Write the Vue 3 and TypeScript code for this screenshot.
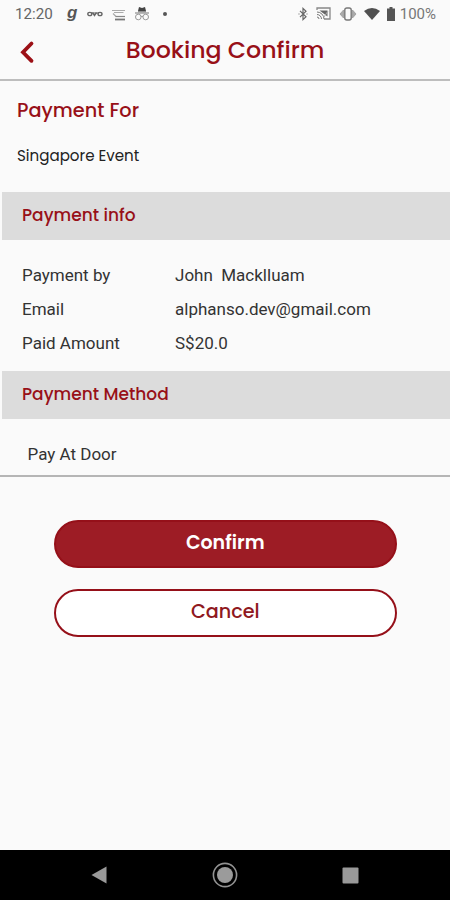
<script setup lang="ts">
interface InfoRow {
  label: string
  value: string
  key: string
}

const rows: InfoRow[] = [
  { key: 'by', label: 'Payment by', value: 'John  Macklluam' },
  { key: 'email', label: 'Email', value: 'alphanso.dev@gmail.com' },
  { key: 'amount', label: 'Paid Amount', value: 'S$20.0' },
]
</script>

<template>
  <div class="screen">
    <div class="status">
      <span class="time">12:20</span>
      <span class="g">g</span>
      <svg class="ovo" width="16" height="8" viewBox="0 0 16 8" fill="none" stroke="#666" stroke-width="1.4">
        <ellipse cx="2.8" cy="4" rx="2" ry="1.6" /><path d="M5.500 2.500l2 3 2-3" /><ellipse cx="13" cy="4" rx="2" ry="1.6" /><path d="M4 3h8" stroke-width="1" />
      </svg>
      <svg class="cart" width="14" height="13" viewBox="0 0 14 13" fill="none" stroke="#888" stroke-width="1.2">
        <path d="M0 1.500h13M2 3.500h9.500M1 4.500l3 3" stroke="#aaa" /><path d="M3.500 7.500h9.500" stroke="#888" /><path d="M3 10.500h10" stroke="#777" stroke-width="1.800" />
      </svg>
      <svg class="spy" width="16" height="15" viewBox="0 0 16 15">
        <path d="M4 5l1-4 3 1 3-1 1 4z" fill="#444" /><path d="M1 7h14M4 5.700h8" stroke="#777" />
        <g fill="none" stroke="#999"><circle cx="4.300" cy="11" r="2.800" /><circle cx="11.700" cy="11" r="2.800" /><path d="M7 10.400h2" /></g>
      </svg>
      <i class="dot"></i>
      <span class="spacer"></span>
      <svg class="bluetooth" width="10" height="14" viewBox="0 0 10 14" fill="none" stroke="#666" stroke-width="1.2">
        <path d="M2 3.800l6 6L5 12.600V1.400l3 2.800-6 6" /><path d="M.5 7h1M8.500 7h1" />
      </svg>
      <svg class="cast" width="15" height="13" viewBox="0 0 15 13" fill="none" stroke="#777">
        <path d="M1 3V1h13v11H8" stroke="#888" stroke-width="1.300" /><path d="M1 5a7 7 0 0 1 7 7M1 7.500A4.500 4.500 0 0 1 5.500 12M1 10a2 2 0 0 1 2 2" /><path d="M3.500 3.500h8v6z" fill="#666" stroke="none" /><path d="M8 10l4-6" stroke="#aaa" />
      </svg>
      <svg class="vibrate" width="18" height="14" viewBox="0 0 18 14" fill="none" stroke="#777">
        <rect x="5.800" y="1" width="6.400" height="12" rx="2" stroke-width="1.400" /><path d="M4.500 3L1 7l3.500 4zM13.500 3L17 7l-3.500 4z" fill="#aaa" stroke="#999" stroke-width=".8" />
      </svg>
      <svg class="wifi" width="16" height="12" viewBox="0 0 16 12"><path d="M0 3Q8-3 16 3L8 12z" fill="#505050" /></svg>
      <svg class="battery" width="8" height="14" viewBox="0 0 8 14"><path d="M2.500 0h3v1.500H8V14H0V1.500h2.500z" fill="#555" /></svg>
      <span class="percent">100%</span>
    </div>

    <header class="header">
      <svg class="back" width="16" height="24" viewBox="0 0 16 24" fill="none" stroke="#9c1016" stroke-width="3.800">
        <path d="M12.500 3.500L4 12.300l8.500 8.500" stroke-linecap="round" />
      </svg>
      <h1>Booking Confirm</h1>
    </header>

    <section class="event">
      <h2>Payment For</h2>
      <p>Singapore Event</p>
    </section>

    <h3 class="band info">Payment info</h3>
    <dl class="rows">
      <div v-for="row in rows" :key="row.key" class="row" :class="row.key">
        <dt>{{ row.label }}</dt>
        <dd>{{ row.value }}</dd>
      </div>
    </dl>
    <h3 class="band method">Payment Method</h3>
    <p class="door">Pay At Door</p>

    <div class="actions">
      <button class="confirm" type="button">Confirm</button>
      <button class="cancel" type="button">Cancel</button>
    </div>

    <nav class="nav">
      <svg width="17" height="20" viewBox="0 0 17 20"><path d="M.5 10L15.500 1.500v17z" fill="#999" /></svg>
      <svg width="26" height="26" viewBox="0 0 26 26"><circle cx="13" cy="13" r="11.600" fill="none" stroke="#929292" stroke-width="1.600" /><circle cx="13" cy="13" r="8" fill="#9b9b9b" /></svg>
      <svg width="17" height="17" viewBox="0 0 17 17"><rect x=".5" y=".5" width="16" height="16" rx="1" fill="#999" /></svg>
    </nav>
  </div>
</template>

<style>
body {
  margin: 0;
  background: #fafafa;
}
</style>

<style scoped>
.screen {
  box-sizing: border-box;
  width: 450px;
  height: 900px;
  display: flex;
  flex-direction: column;
  overflow: hidden;
  background: #fafafa;
  color: #333;
  font-family: Roboto, "Liberation Sans", sans-serif;
}
h1, h2, h3, p, dl, dt, dd {
  margin: 0;
}
h1, h2, h3, .event p, button {
  font-family: Poppins, Inter, sans-serif;
  font-weight: 500;
  color: #981018;
  white-space: nowrap;
}
.status {
  height: 27px;
  flex: none;
  display: flex;
  align-items: center;
  padding: 0 14px 0 15px;
  color: #666;
  font-size: 15.200px;
}
.status svg {
  flex: none;
}
.time {
  width: 52px;
  padding-top: 1px;
}
.g {
  width: 20px;
  font: italic bold 17px/20px "Liberation Sans", sans-serif;
  color: #555;
  margin-top: -2px;
}
.cart {
  margin: 3px 0 0 9px;
}
.spy {
  margin-left: 8px;
}
.dot {
  width: 4px;
  height: 4px;
  border-radius: 50%;
  background: #555;
  margin-left: 13px;
}
.spacer {
  flex: 1;
}
.cast {
  margin-left: 8px;
}
.vibrate {
  margin-left: 8px;
}
.wifi {
  margin-left: 7px;
}
.battery {
  margin-left: 7px;
}
.percent {
  margin-left: 5px;
  padding-top: 1px;
  color: #777;
  font-size: 15px;
}
.header {
  height: 52px;
  flex: none;
  position: relative;
  border-bottom: 2px solid #bdbdbd;
  text-align: center;
}
.back {
  position: absolute;
  left: 19px;
  top: 13px;
}
h1 {
  font-size: 23.700px;
  line-height: 30px;
  padding-top: 8px;
}
.event {
  height: 111px;
  flex: none;
  padding-left: 17px;
}
h2 {
  font-size: 19.300px;
  line-height: 24px;
  padding-top: 18px;
}
.event p {
  font-size: 15.100px;
  line-height: 20px;
  padding-top: 23px;
  color: #222;
  font-weight: 400;
}
.band {
  height: 48px;
  flex: none;
  box-sizing: border-box;
  margin-left: 2px;
  padding-left: 20px;
  background: #dcdcdc;
  font-size: 17px;
  line-height: 47px;
}
.rows {
  height: 131px;
  flex: none;
  box-sizing: border-box;
  padding: 18px 0 0 22px;
}
.row {
  display: grid;
  grid-template-columns: 153px 1fr;
  height: 34px;
  line-height: 34px;
  font-size: 17px;
  white-space: pre;
}
.door {
  flex: none;
  box-sizing: border-box;
  height: 58px;
  padding: 18px 0 0 27.500px;
  border-bottom: 2px solid #b5b5b5;
  font-size: 17px;
  line-height: 34px;
}
.actions {
  flex: 1;
  display: flex;
  flex-direction: column;
  gap: 21px;
  padding: 42.500px 53px 0 53.500px;
}
button {
  height: 48px;
  flex: none;
  box-sizing: border-box;
  border: 2px solid #951019;
  border-radius: 24px;
  padding: 0 0 2px;
  font-size: 19.200px;
  line-height: 24px;
}
.confirm {
  background: #9d1c25;
  color: #fff;
  font-size: 19px;
  font-weight: 600;
}
.cancel {
  background: #fff;
  color: #8f1820;
}
.nav {
  height: 50px;
  flex: none;
  display: flex;
  align-items: center;
  justify-content: space-between;
  padding: 0 91px;
  box-sizing: border-box;
  background: #000;
}
</style>
